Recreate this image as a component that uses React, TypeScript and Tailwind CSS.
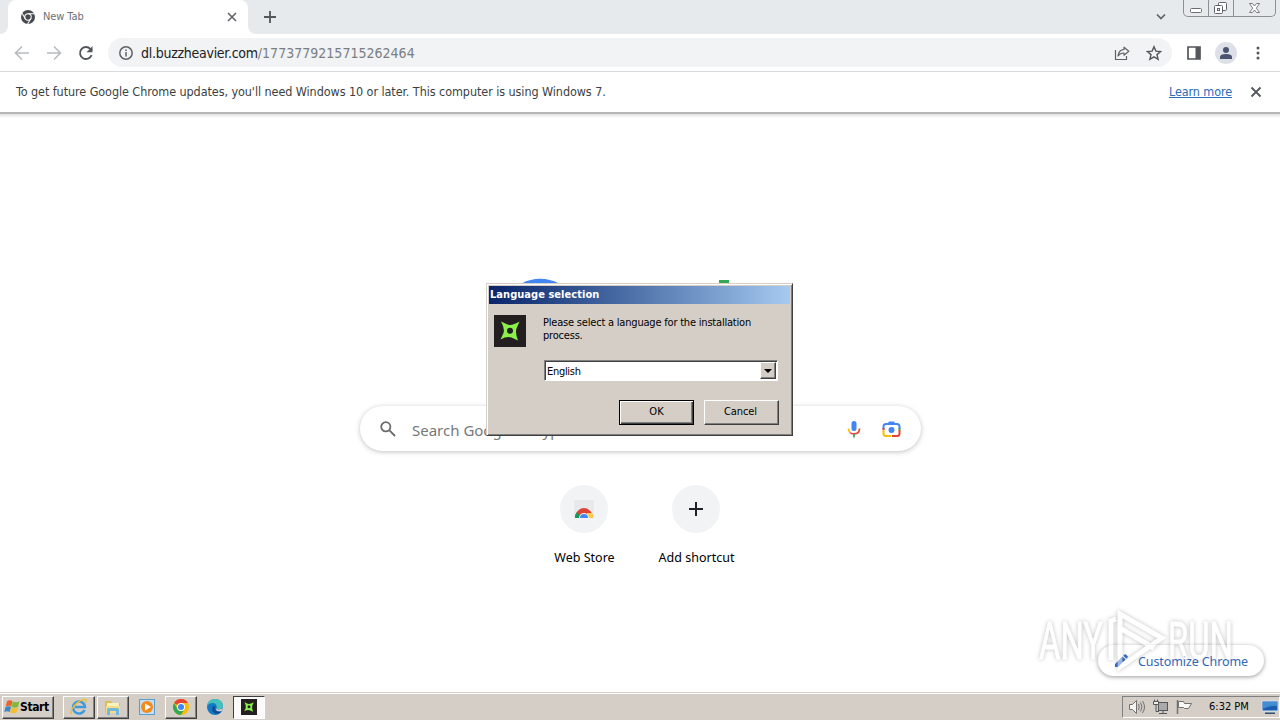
import type { ReactNode } from 'react';

const uiFont = "font-['DejaVu_Sans_Condensed','DejaVu_Sans',sans-serif] [font-stretch:condensed]";
const webFont = "font-['Noto_Sans',sans-serif]";

function ChromeBall({ size }: { size: number }) {
  return (
    <svg width={size} height={size} viewBox="0 0 24 24">
      <circle cx="12" cy="12" r="12" fill="#fbbc05" />
      <path d="M1.6 6A12 12 0 0 1 22.4 6H12a6 6 0 0 0-5.2 3Z" fill="#ea4335" />
      <path d="M1.6 6A12 12 0 0 0 12 24l5.2-9A6 6 0 0 1 6.8 15Z" fill="#34a853" />
      <circle cx="12" cy="12" r="6" fill="#fff" />
      <circle cx="12" cy="12" r="4.6" fill="#4285f4" />
    </svg>
  );
}

function Shuriken({ size }: { size: number }) {
  return (
    <svg width={size} height={size} viewBox="0 0 32 32">
      <rect width="32" height="32" fill="#231f20" />
      <path
        fillRule="evenodd"
        d="M7 6.500 13.500 9.500Q18 11 25.500 6.500L22.500 13.500Q21 18 24 25.500L17.500 22.500Q13 21 6.500 24.500L9.500 18Q11 13.500 7 6.500ZM16 12.700a3 3 0 1 0 0 6 3 3 0 0 0 0-6Z"
        fill="#8cf04b"
      />
    </svg>
  );
}

function TabStrip() {
  return (
    <div className="flex h-[34px] bg-[#e7eaed]">
      <div className="w-2 bg-white">
        <div className="h-full rounded-br-lg bg-[#e7eaed]" />
      </div>
      <div className="flex w-[240px] items-center rounded-t-lg bg-white pl-[13px] pr-[10px]">
        <svg width="14" height="14" viewBox="0 0 24 24">
          <circle cx="12" cy="12" r="12" fill="#46494d" />
          <circle cx="12" cy="12" r="5.500" fill="none" stroke="#fff" strokeWidth="1.800" />
          <path d="M12 6.500h11M7.200 14.700 1.800 5.500M16.800 14.700 11.300 24" stroke="#fff" strokeWidth="1.800" />
        </svg>
        <span className={`${uiFont} ml-2 pt-px text-[11px] tracking-[-0.1px] text-[#6c7074]`}>New Tab</span>
        <svg className="ml-auto" width="12" height="12" viewBox="0 0 12 12" stroke="#5f6368" strokeWidth="1.600">
          <path d="m2 2 8 8M10 2l-8 8" />
        </svg>
      </div>
      <div className="w-2 bg-white">
        <div className="h-full rounded-bl-lg bg-[#e7eaed]" />
      </div>
      <svg className="ml-[7px] mt-[10px]" width="14" height="14" viewBox="0 0 14 14" stroke="#53565a" strokeWidth="1.800">
        <path d="M7 1v12M1 7h12" />
      </svg>
      <svg className="ml-auto mt-[11px]" width="12" height="12" viewBox="0 0 12 12" fill="none" stroke="#5f6368" strokeWidth="1.700">
        <path d="m2 3.500 4 4 4-4" />
      </svg>
      <div className="ml-4 mr-1 flex h-[17px] w-[93px] rounded-b-[5px] border border-t-0 border-[#8c9095]">
        <div className="w-[25px] border-r border-[#8c9095]">
          <svg width="24" height="16" viewBox="0 0 24 16" fill="#fff" stroke="#6b6f73">
            <rect x="6.500" y="8.500" width="11" height="4" rx="1" />
          </svg>
        </div>
        <div className="w-[25px] border-r border-[#8c9095]">
          <svg width="24" height="16" viewBox="0 0 24 16" fill="#fff" stroke="#60646a">
            <rect x="9.500" y="2.500" width="8" height="8" rx="1" />
            <rect x="5.500" y="5.500" width="8" height="8" rx="1" />
            <rect x="8.500" y="8.500" width="2" height="2" />
          </svg>
        </div>
        <svg width="41" height="16" viewBox="0 0 41 16" fill="#fff" stroke="#6b6f73" strokeWidth=".9">
          <path d="M15.500 3.500h3l2 2.500 2-2.500h3l-3.200 4.700 3.200 4.300h-3l-2-2.500-2 2.500h-3l3.200-4.300Z" />
        </svg>
      </div>
    </div>
  );
}

function Toolbar() {
  return (
    <div className="flex h-[38px] items-center border-b border-[#d8dadd] bg-white pl-[14px] pr-[14px]">
      <svg width="16" height="16" viewBox="0 0 16 16" fill="none" stroke="#b9bbbe" strokeWidth="1.600">
        <path d="M15 8H2M8 1.500 1.500 8 8 14.500" />
      </svg>
      <svg className="ml-4" width="16" height="16" viewBox="0 0 16 16" fill="none" stroke="#b9bbbe" strokeWidth="1.600">
        <path d="M1 8h13M8 1.500 14.500 8 8 14.500" />
      </svg>
      <svg className="ml-4" width="16" height="16" viewBox="0 0 16 16" fill="none" stroke="#53565a" strokeWidth="1.800">
        <path d="M13.600 10.200A6 6 0 1 1 12.300 3.800L14 5.500" />
        <path d="M14.500 1v6.200H8.600Z" fill="#53565a" stroke="none" />
      </svg>
      <div className="ml-[14px] flex h-[29px] w-[1064px] items-center rounded-full bg-[#f1f3f4] pl-[11px] pr-[10px]">
        <svg width="14" height="14" viewBox="0 0 14 14" fill="none" stroke="#5f6368" strokeWidth="1.500">
          <circle cx="7" cy="7" r="6.200" />
          <path d="M7 6v4.500M7 3.400v1.500" />
        </svg>
        <span className={`${uiFont} ml-[8px] pt-[2px] text-[14px] text-[#202124]`}>
          <span className="tracking-[-0.27px]">dl.buzzheavier.com</span>
          <span className="tracking-[0.02px] text-[#7a7e83]">/1773779215715262464</span>
        </span>
        <svg className="ml-auto" width="16" height="16" viewBox="0 0 16 16" fill="none" stroke="#5f6368" strokeWidth="1.200">
          <path d="M1.500 5v9.500h11V11" />
          <path d="M10 2.200 14.800 6.200 10 10.200V8Q6.500 7.800 4 11 4.800 5 10 4.400Z" strokeLinejoin="round" />
        </svg>
        <svg className="ml-4" width="16" height="16" viewBox="0 0 16 16" fill="none" stroke="#53565a" strokeWidth="1.400">
          <path d="m8 1.700 1.900 4.400 4.700.4-3.600 3.100 1.100 4.700L8 11.800l-4.100 2.500L5 9.600 1.400 6.500l4.700-.4Z" />
        </svg>
      </div>
      <svg className="ml-[15px]" width="14" height="14" viewBox="0 0 14 14">
        <path d="M1 1h12v12H1Z" fill="#fff" stroke="#53565a" strokeWidth="1.700" />
        <path d="M8.500 1h4.500v12H8.500Z" fill="#53565a" />
      </svg>
      <svg className="ml-[14px]" width="22" height="22" viewBox="0 0 22 22" fill="#4a5470">
        <circle cx="11" cy="11" r="11" fill="#dde1e7" />
        <circle cx="11" cy="8" r="3" />
        <path d="M5 17v-2q0-3 6-3t6 3v2Z" />
      </svg>
      <svg className="ml-auto mr-[6px]" width="4" height="16" viewBox="0 0 4 16" fill="#53565a">
        <circle cx="2" cy="3" r="1.500" />
        <circle cx="2" cy="8" r="1.500" />
        <circle cx="2" cy="13" r="1.500" />
      </svg>
    </div>
  );
}

function InfoBar() {
  return (
    <div className={`${uiFont} flex h-[40px] items-center bg-white pl-4 pr-[18px] text-[12.5px] text-[#3c3f42]`}>
      <span className="tracking-[-0.075px]">
        To get future Google Chrome updates, you'll need Windows 10 or later. This computer is using Windows 7.
      </span>
      <span className="ml-auto tracking-[-0.1px] text-[#2b6cb8] underline">Learn more</span>
      <svg className="ml-[18px]" width="12" height="12" viewBox="0 0 12 12" stroke="#53565a" strokeWidth="1.800">
        <path d="m1.500 1.500 9 9M10.500 1.500l-9 9" />
      </svg>
    </div>
  );
}

function Shortcut({ label, children }: { label: string; children: ReactNode }) {
  return (
    <div className="flex w-28 flex-col items-center">
      <div className="flex h-12 w-12 items-center justify-center rounded-full bg-[#f1f3f4]">{children}</div>
      <span className={`${webFont} ml-px mt-4 whitespace-nowrap text-[12.5px] leading-[18px] text-black`}>{label}</span>
    </div>
  );
}

function NewTabPage() {
  return (
    <div className="flex flex-1 flex-col items-center bg-white">
      <div className="h-[2px] w-full bg-[#b5b6b7]" />
      <div className="h-[4px] w-full bg-gradient-to-b from-[#e2e2e2] to-white" />
      <svg className="mt-[158px]" width="272" height="92" viewBox="0 0 272 92">
        <path d="M64 21A35 35 0 1 0 71 46H36" fill="none" stroke="#4285f4" strokeWidth="9" />
        <rect x="215" y="4" width="10" height="62" fill="#34a853" />
      </svg>
      <div className="ml-px mt-[38px] flex h-[45px] w-[561px] items-center rounded-full bg-white pl-[20px] pr-[20px] shadow-[0_1px_5px_rgba(32,33,36,0.28)]">
        <svg width="16" height="16" viewBox="0 0 16 16" fill="none" stroke="#6a6a6a" strokeWidth="1.800">
          <circle cx="5.800" cy="5.800" r="4.600" />
          <path d="m9.200 9.200 5.800 5.800" />
        </svg>
        <span className={`${webFont} ml-4 pt-[3px] text-[15px] text-[#75787c]`}>Search Google or type a URL</span>
        <svg className="ml-auto" width="14" height="18" viewBox="0 0 14 18" fill="none" strokeWidth="1.700">
          <rect x="4.500" y="1" width="5" height="10" rx="2.500" fill="#4285f4" />
          <path d="M1.500 8.500Q1.500 11 3 12.500" stroke="#fbbc05" />
          <path d="M3 12.500Q4.500 13.900 7 13.900q5.500 0 5.500-5.400" stroke="#ea4335" />
          <path d="M7 14v3.500" stroke="#34a853" />
        </svg>
        <svg className="ml-[21px]" width="19" height="18" viewBox="0 0 19 18" fill="none" strokeWidth="2">
          <path d="M1.500 9V6.500Q1.500 4 4 4h11q2.500 0 2.500 2.500V9" stroke="#4285f4" />
          <path d="M5.500 4 7 1.500h5L13.500 4Z" fill="#4285f4" />
          <path d="M1.500 10v3.500q0 2.500 2.500 2.500h5" stroke="#fbbc05" />
          <path d="M17.500 8v2.500" stroke="#34a853" />
          <path d="M17.500 10v3.500q0 2.500-2.500 2.500h-5M1.500 10V8" stroke="#ea4335" />
          <circle cx="9.500" cy="10" r="3" fill="#4285f4" />
        </svg>
      </div>
      <div className="mt-[34px] flex">
        <Shortcut label="Web Store">
          <svg width="22" height="22" viewBox="0 0 22 22">
            <path d="M1 2h20v18H1Z" fill="#e8e9ea" />
            <path d="M2 20a9 10 0 0 1 18 0Z" fill="#db4437" />
            <path d="M2 20q0-4 2-6l4 6Z" fill="#0f9d58" />
            <path d="M14 15h5q1 2 1 5h-6Z" fill="#ffcd40" />
            <path d="M6 20a5 5 0 0 1 10 0Z" fill="#f1f1f1" />
            <path d="M7 20a4 4 0 0 1 8 0Z" fill="#4285f4" />
          </svg>
        </Shortcut>
        <Shortcut label="Add shortcut">
          <svg width="14" height="14" viewBox="0 0 14 14" stroke="#202124" strokeWidth="2">
            <path d="M7 0v14M0 7h14" />
          </svg>
        </Shortcut>
      </div>
    </div>
  );
}

const raised = 'border border-t-white border-l-white border-b-[#404040] border-r-[#404040] shadow-[inset_-1px_-1px_#808080]';

function LanguageDialog() {
  return (
    <div className={`${uiFont} absolute left-[486px] top-[283px] h-[153px] w-[307px] border border-b-[#404040] border-l-[#d4d0c8] border-r-[#404040] border-t-[#d4d0c8] bg-[#d5cec7] p-[2px] text-[11px] text-black shadow-[inset_1px_1px_#fff,inset_-1px_-1px_#808080]`}>
      <div className="flex h-[18px] items-center bg-gradient-to-r from-[#0a246a] to-[#a6caf0] pl-px pt-px font-bold tracking-[0.04px] text-white">
        Language selection
      </div>
      <div className="flex pl-[5px] pt-[11px]">
        <Shuriken size={32} />
        <div className="ml-[17px] w-[236px]">
          <p className="h-[34px] whitespace-nowrap pt-px leading-[13px] tracking-[-0.2px]">
            Please select a language for the installation
            <br />
            process.
          </p>
          <div className="ml-px mt-[11px] flex h-[21px] w-[234px] border border-b-white border-l-[#808080] border-r-white border-t-[#808080] bg-white p-px shadow-[inset_1px_1px_#404040]">
            <span className="flex-1 pl-px leading-[19px] tracking-[-0.3px]">English</span>
            <div className={`${raised} flex h-[17px] w-[16px] items-center justify-center bg-[#d5cec7]`}>
              <svg width="8" height="4" viewBox="0 0 8 4">
                <path d="M0 0h8L4 4Z" />
              </svg>
            </div>
          </div>
        </div>
      </div>
      <div className="mt-[19px] flex justify-end gap-[10px] pr-[11px]">
        <button className="h-[25px] w-[75px] border border-black shadow-[inset_1px_1px_#fff,inset_-1px_-1px_#404040,inset_-2px_-2px_#808080]">OK</button>
        <button className={`${raised} h-[25px] w-[75px] pr-[2px] tracking-[-0.1px]`}>Cancel</button>
      </div>
    </div>
  );
}

function CustomizeButton() {
  return (
    <div className={`${webFont} absolute left-[1098px] top-[645px] flex h-[31px] w-[166px] items-center rounded-full bg-white pl-[17px] text-[12.5px] text-[#3267b8] shadow-[0_1px_4px_rgba(0,0,0,0.4)]`}>
      <svg width="13" height="13" viewBox="0 0 13 13" fill="#3970c4">
        <path d="M0 13v-3l7.500-7.500 3 3L3 13ZM8.300 1.700 9.500.5q.7-.7 1.500 0l1.500 1.500q.7.700 0 1.500l-1.200 1.200Z" />
      </svg>
      <span className="ml-[10px] whitespace-nowrap pt-[3px] tracking-[-0.1px]">Customize Chrome</span>
    </div>
  );
}

function Watermark() {
  return (
    <svg className="absolute left-[1030px] top-[603px] overflow-visible [filter:drop-shadow(0_0_2px_rgba(0,0,0,0.5))]" width="210" height="80" viewBox="0 0 210 80" opacity=".5">
      <g fill="#fff" stroke="#fff" strokeWidth=".8" fontFamily="Roboto, sans-serif" fontSize="51">
        <text x="9" y="56" textLength="64" lengthAdjust="spacingAndGlyphs">ANY</text>
        <text x="138" y="56" textLength="65" lengthAdjust="spacingAndGlyphs">RUN</text>
      </g>
      <path d="M81 57V18l5-2M90 60V11l42 24-42 29V25l34 20" fill="none" stroke="#fff" strokeWidth="5" />
    </svg>
  );
}

function TaskButton({ children }: { children: ReactNode }) {
  return <div className={`${raised} flex h-[23px] w-[32px] items-center justify-center bg-[#d5cec7]`}>{children}</div>;
}

function Taskbar() {
  return (
    <div className={`${uiFont} flex h-[28px] items-center border-t border-[#d5cec7] bg-[#d5cec7] pl-[2px] pt-px text-[11px] shadow-[inset_0_1px_#fff]`}>
      <div className={`${raised} flex h-[23px] w-[52px] items-center pl-px text-[12px] font-bold`}>
        <svg className="shrink-0" width="16" height="16" viewBox="0 0 16 16">
          <path d="M3 2q3-1.500 5.500 0L7.200 7.500Q5 6 1.800 7.500Z" fill="#e8642b" />
          <path d="M8.800 2.500q3 1.500 6.500 0L14 8q-3 1.500-6.500 0Z" fill="#80b93b" />
          <path d="M1.500 8q3-1.500 5.500 0l-1.300 5Q3.500 11.500.3 13Z" fill="#3d85c9" />
          <path d="M7.300 8.500q3 1.500 6.500 0l-1.300 5q-3 1.500-6.500 0Z" fill="#f5bd30" />
        </svg>
        <span className="tracking-[-0.4px]">Start</span>
      </div>
      <div className="ml-[9px] flex items-center gap-[2px]">
        <TaskButton>
          <svg width="18" height="18" viewBox="0 0 18 18" fill="none">
            <path d="M14.500 12A6 6 0 1 1 15 9H5" stroke="#3d9bdc" strokeWidth="2.500" />
            <path d="M2 15Q-.5 17 2 11 7 3 14 1.500q4-.5 1 4" stroke="#edbb35" strokeWidth="1.300" />
          </svg>
        </TaskButton>
        <TaskButton>
          <svg width="18" height="18" viewBox="0 0 18 18">
            <path d="M1 3h6l1 2h8v10H1Z" fill="#dfb95a" />
            <path d="M3 5h12v4H3Z" fill="#fff3bd" />
            <path d="M2 8h14v7H2Z" fill="#f5dc87" />
            <path d="M3 17v-5.500q0-1.500 1.500-1.500h9q1.500 0 1.500 1.500V17h-3v-4H6v4Z" fill="#70b9dc" />
          </svg>
        </TaskButton>
        <div className="flex w-[32px] justify-center">
          <svg width="16" height="16" viewBox="0 0 16 16">
            <rect x=".5" y=".5" width="15" height="15" fill="#c3ddf1" stroke="#5a9ed0" />
            <circle cx="8" cy="8" r="6" fill="#f28a1c" />
            <path d="M6 4.500v7L12 8Z" fill="#fff" />
          </svg>
        </div>
        <TaskButton>
          <ChromeBall size={16} />
        </TaskButton>
        <div className="flex w-[32px] justify-center">
          <svg width="16" height="16" viewBox="0 0 16 16">
            <circle cx="8" cy="8" r="8" fill="#1478c8" />
            <path d="M0 7Q1 0 8 0q7.500 0 8 6.500 0 3.500-4 4-3-.2-2.300-2Q10 4 5.500 4 2 4 0 7Z" fill="#43c1ba" />
            <path d="M6 7q-3 5 3 8 4 0 6-3-4 1.500-6-.5-2-2-.5-4Z" fill="#104f94" />
            <path d="M9.700 8.500q-.7 2 2.300 2 3 0 4-2l-1 3.500q-5 1-6-1Z" fill="#d5cec7" />
          </svg>
        </div>
        <div className="flex h-[23px] w-[32px] items-center justify-center border border-b-white border-l-[#404040] border-r-white border-t-[#404040] bg-[#fcfbfa]">
          <Shuriken size={16} />
        </div>
      </div>
      <div className="ml-auto flex h-[22px] w-[158px] items-center border border-b-white border-l-[#808080] border-r-white border-t-[#808080] pl-[6px]">
        <svg className="shrink-0" width="17" height="16" viewBox="0 0 17 16" fill="none" stroke="#707070">
          <path d="M.5 5.500h3l4-4v13l-4-4h-3Z" fill="#f5f4f2" />
          <path d="M9.500 5q1.500 3 0 6M11.500 3.500q3 4.500 0 9M13.500 2q4 6 0 12" />
        </svg>
        <svg className="ml-[6px] shrink-0" width="17" height="16" viewBox="0 0 17 16" fill="#eee" stroke="#55575a">
          <rect x="6.500" y="3.500" width="9" height="8" fill="#aaa" />
          <path d="M2.500.5v2M5.500.5v2M1.500 2.500h5v3h-5Z" />
          <path d="M4 6v6.500h3M7 14.500h8M11 12v2" fill="none" />
        </svg>
        <svg className="ml-[7px] shrink-0" width="17" height="16" viewBox="0 0 17 16" fill="#f8f7f5" stroke="#707070">
          <path d="M1.500 1v14" strokeWidth="1.500" />
          <path d="M2.500 2.500h5l1 2h7l-3 5h-4l-1-1h-5Z" />
        </svg>
        <span className="ml-4 whitespace-nowrap text-black">6:32 PM</span>
        <svg className="ml-auto shrink-0" width="18" height="16" viewBox="0 0 18 16">
          <path d="M1 2h16v10H1Z" fill="#1b5eb1" stroke="#d9e6f2" />
          <path d="M2 3h14v4Q8 6 2 10Z" fill="#438ed2" />
          <path d="M4 13.500h10v1.500H4Z" fill="#314e76" />
        </svg>
      </div>
    </div>
  );
}

export default function App() {
  return (
    <div className="relative flex h-[720px] w-[1280px] flex-col overflow-hidden bg-white">
      <TabStrip />
      <Toolbar />
      <InfoBar />
      <NewTabPage />
      <CustomizeButton />
      <LanguageDialog />
      <Watermark />
      <Taskbar />
    </div>
  );
}
